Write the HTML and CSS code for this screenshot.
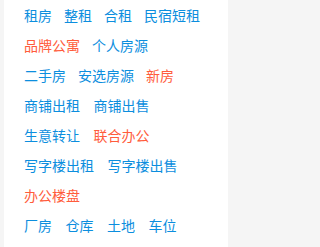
FILE: index.html
```html
<!DOCTYPE html>
<html lang="zh-CN">
<head>
<meta charset="utf-8">
<title>房产分类</title>
<link rel="stylesheet" href="styles.css">
</head>
<body>
<div class="panel">
  <div class="group group-home">
    <div class="row"><a class="link">租房</a><a class="link">整租</a><a class="link">合租</a><a class="link">民宿短租</a></div>
    <div class="row"><a class="link hot">品牌公寓</a><a class="link">个人房源</a></div>
    <div class="row"><a class="link">二手房</a><a class="link">安选房源</a><a class="link hot">新房</a></div>
  </div>
  <div class="group group-biz">
    <div class="row"><a class="link">商铺出租</a><a class="link">商铺出售</a></div>
    <div class="row"><a class="link">生意转让</a><a class="link hot">联合办公</a></div>
    <div class="row"><a class="link">写字楼出租</a><a class="link">写字楼出售</a></div>
    <div class="row"><a class="link hot">办公楼盘</a></div>
    <div class="row"><a class="link">厂房</a><a class="link">仓库</a><a class="link">土地</a><a class="link">车位</a></div>
  </div>
</div>
</body>
</html>
```

FILE: styles.css
```css
html, body {
  margin: 0;
  padding: 0;
  background: #f5f5f5;
}
body {
  font-family: "Noto Sans CJK SC", "Noto Sans", sans-serif;
  font-size: 14px;
}
.panel {
  margin-left: 4px;
  width: 224px;
  height: 247px;
  background: #ffffff;
  box-sizing: border-box;
  padding-left: 20px;
}
.row {
  display: flex;
  height: 30px;
  line-height: 30px;
  white-space: nowrap;
}
.group-home .row { gap: 12px; }
.group-biz .row { gap: 13.5px; }
.link {
  color: #0c8ede;
  text-decoration: none;
}
.link.hot {
  color: #ff5c3c;
}
```
